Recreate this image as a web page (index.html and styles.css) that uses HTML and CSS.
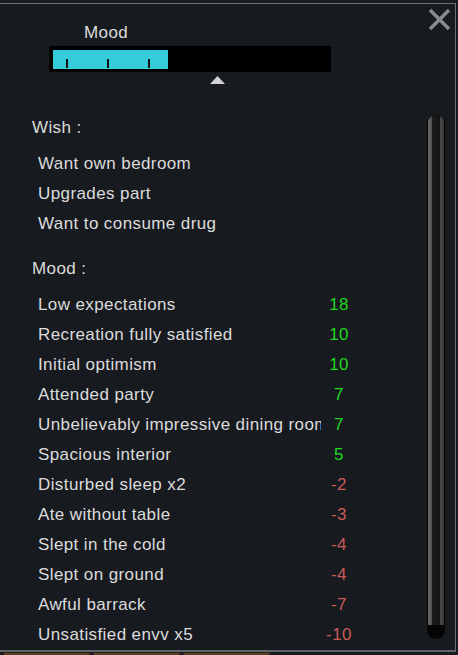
FILE: index.html
```html
<!DOCTYPE html>
<html lang="en">
<head>
    <meta charset="UTF-8">
    <title>Colonist Mood</title>
    <link rel="stylesheet" href="styles.css">
</head>
<body>
    <div class="window">
        <button class="close-btn" aria-label="Close">
            <svg width="23" height="23" viewBox="0 0 23 23">
                <path d="M2 2 L21 21 M21 2 L2 21" stroke="#878a8e" stroke-width="3.6" fill="none"/>
            </svg>
        </button>

        <div class="mood-label">Mood</div>
        <div class="mood-bar">
            <div class="mood-fill" style="width: 115px;">
                <span class="tick" style="left: 13px;"></span>
                <span class="tick" style="left: 54px;"></span>
                <span class="tick" style="left: 95px;"></span>
            </div>
        </div>
        <div class="marker">
            <svg width="15" height="8" viewBox="0 0 15 8">
                <polygon points="7.5,0 15,8 0,8" fill="#d2d2d2"/>
            </svg>
        </div>

        <div class="content">
            <div class="list">
                <div class="section-title">Wish :</div>
                <div class="item">Want own bedroom</div>
                <div class="item">Upgrades part</div>
                <div class="item">Want to consume drug</div>

                <div class="section-title mood-title">Mood :</div>
                <div id="moodRows"></div>
            </div>
            <div class="scrollbar">
                <div class="thumb"></div>
            </div>
        </div>
    </div>

    <div class="tabs">
        <div class="tab"></div>
        <div class="tab"></div>
        <div class="tab"></div>
    </div>

    <script>
        const moods = [
            ['Low expectations', 18],
            ['Recreation fully satisfied', 10],
            ['Initial optimism', 10],
            ['Attended party', 7],
            ['Unbelievably impressive dining room', 7],
            ['Spacious interior', 5],
            ['Disturbed sleep x2', -2],
            ['Ate without table', -3],
            ['Slept in the cold', -4],
            ['Slept on ground', -4],
            ['Awful barrack', -7],
            ['Unsatisfied envv x5', -10]
        ];

        const rows = document.getElementById('moodRows');
        moods.forEach(m => {
            const row = document.createElement('div');
            row.className = 'mood-row';
            row.innerHTML = `
                <span class="mood-name">${m[0]}</span>
                <span class="mood-value ${m[1] < 0 ? 'neg' : 'pos'}">${m[1]}</span>
            `;
            rows.appendChild(row);
        });
    </script>
</body>
</html>
```

FILE: styles.css
```css
body {
    margin: 0;
    background-color: #171a1f;
    font-family: 'Liberation Sans', Arial, sans-serif;
    font-size: 17px;
    letter-spacing: 0.4px;
    color: #dcdcdc;
    overflow: hidden;
}
.window {
    position: relative;
    width: 455px;
    height: 646px;
    margin-top: 3px;
    border-top: 1px solid #6c7178;
    border-right: 1px solid #6c7178;
    border-bottom: 2px solid #5e636a;
    overflow: hidden;
}
.close-btn {
    position: absolute;
    top: 4px;
    right: 4px;
    padding: 0;
    border: none;
    background: none;
    line-height: 0;
    cursor: pointer;
}
.mood-label {
    padding-top: 19px;
    padding-left: 84px;
    line-height: 20px;
}
.mood-bar {
    box-sizing: border-box;
    width: 282px;
    height: 26px;
    margin: 3px 0 0 49px;
    padding: 4px 4px 3px 4px;
    background-color: #000;
}
.mood-fill {
    position: relative;
    height: 19px;
    background-color: #33ccd8;
}
.tick {
    position: absolute;
    top: 9px;
    width: 2px;
    height: 9px;
    background-color: #111;
}
.marker {
    margin: 4px 0 0 210px;
    line-height: 0;
}
.content {
    display: flex;
    margin-top: 29px;
}
.list {
    flex: 1;
    padding-left: 32px;
}
.section-title {
    line-height: 30px;
    margin-bottom: 6px;
}
.mood-title {
    margin-top: 15px;
}
.item {
    padding-left: 6px;
    line-height: 30px;
}
.mood-row {
    display: flex;
    padding-left: 6px;
    line-height: 30px;
}
.mood-name {
    width: 283px;
    overflow: hidden;
    white-space: nowrap;
}
.mood-value {
    width: 36px;
    text-align: center;
}
.pos {
    color: #20d820;
}
.neg {
    color: #c85a5a;
}
.scrollbar {
    box-sizing: border-box;
    width: 18px;
    height: 524px;
    margin: 2px 10px 0 0;
    border-radius: 9px;
    background-color: #050505;
    overflow: hidden;
}
.thumb {
    height: 510px;
    border-radius: 9px 9px 0 0;
    background: linear-gradient(to right, #000 0, #000 1px, #6a6a6a 1px, #4e4e4e 5px, #1c1c1c 5px, #141414 13px, #4a4a4a 13px, #3a3a3a 17px, #000 17px);
}
.tabs {
    display: flex;
    gap: 3px;
    margin-left: 3px;
}
.tab {
    box-sizing: border-box;
    width: 87px;
    height: 12px;
    border: 1px solid #2a2112;
    background-color: #54412a;
}
```
